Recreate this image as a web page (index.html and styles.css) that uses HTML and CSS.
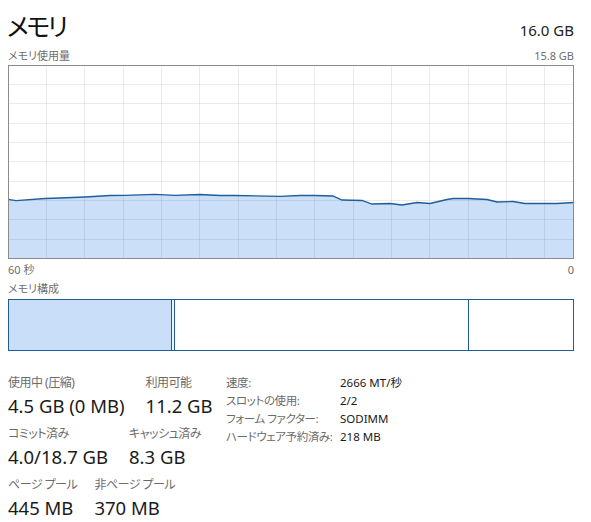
FILE: index.html
```html
<!DOCTYPE html>
<html lang="ja">
<head>
<meta charset="utf-8">
<link rel="stylesheet" href="styles.css">
</head>
<body>
<div class="page">
  <div class="header">
    <div class="title">メモリ</div>
    <div class="total">16.0 GB</div>
  </div>
  <div class="sub-row">
    <span>メモリ使用量</span>
    <span>15.8 GB</span>
  </div>
  <svg class="graph" width="566" height="194" viewBox="0 0 566 194">
    <polygon class="fill" points="0,134.3 8,135.7 37,133.5 52,133 77,132 102,130.5 117,130.3 147,129.3 167,130.3 192,129.5 212,130.5 227,130.5 272,131.3 292,130.5 307,130.5 325,131 334,135 354,135.5 364,139 382,138.5 394,140 409,137.5 422,138.5 439,134.5 445,133.5 460,133.5 479,134.5 489,137 505,136.5 517,138.5 549,138.5 566,137.5 566,194 0,194"/>
    <g class="grid">
      <line x1="38.5" y1="0" x2="38.5" y2="194"/>
      <line x1="76.5" y1="0" x2="76.5" y2="194"/>
      <line x1="115.5" y1="0" x2="115.5" y2="194"/>
      <line x1="153.5" y1="0" x2="153.5" y2="194"/>
      <line x1="191.5" y1="0" x2="191.5" y2="194"/>
      <line x1="230.5" y1="0" x2="230.5" y2="194"/>
      <line x1="268.5" y1="0" x2="268.5" y2="194"/>
      <line x1="306.5" y1="0" x2="306.5" y2="194"/>
      <line x1="345.5" y1="0" x2="345.5" y2="194"/>
      <line x1="383.5" y1="0" x2="383.5" y2="194"/>
      <line x1="421.5" y1="0" x2="421.5" y2="194"/>
      <line x1="460.5" y1="0" x2="460.5" y2="194"/>
      <line x1="498.5" y1="0" x2="498.5" y2="194"/>
      <line x1="536.5" y1="0" x2="536.5" y2="194"/>
      <line x1="0" y1="19.5" x2="566" y2="19.5"/>
      <line x1="0" y1="38.5" x2="566" y2="38.5"/>
      <line x1="0" y1="58.5" x2="566" y2="58.5"/>
      <line x1="0" y1="77.5" x2="566" y2="77.5"/>
      <line x1="0" y1="96.5" x2="566" y2="96.5"/>
      <line x1="0" y1="116.5" x2="566" y2="116.5"/>
      <line x1="0" y1="135.5" x2="566" y2="135.5"/>
      <line x1="0" y1="154.5" x2="566" y2="154.5"/>
      <line x1="0" y1="174.5" x2="566" y2="174.5"/>
    </g>
    <polyline class="line" points="0,134.3 8,135.7 37,133.5 52,133 77,132 102,130.5 117,130.3 147,129.3 167,130.3 192,129.5 212,130.5 227,130.5 272,131.3 292,130.5 307,130.5 325,131 334,135 354,135.5 364,139 382,138.5 394,140 409,137.5 422,138.5 439,134.5 445,133.5 460,133.5 479,134.5 489,137 505,136.5 517,138.5 549,138.5 566,137.5"/>
    <rect class="frame" x="0.5" y="0.5" width="565" height="193"/>
  </svg>
  <div class="sub-row axis">
    <span>60 秒</span>
    <span>0</span>
  </div>
  <div class="sub-row comp-label">
    <span>メモリ構成</span>
  </div>
  <div class="comp">
    <div class="seg inuse" style="width:162px"></div>
    <div class="seg modified" style="width:2px"></div>
    <div class="seg standby" style="width:293px"></div>
    <div class="seg free"></div>
  </div>
  <div class="stats">
    <div class="stat-rows">
      <div class="stat-row">
        <div class="stat"><div class="label">使用中 (圧縮)</div><div class="value">4.5 GB (0 MB)</div></div>
        <div class="stat"><div class="label">利用可能</div><div class="value">11.2 GB</div></div>
      </div>
      <div class="stat-row">
        <div class="stat"><div class="label">コミット済み</div><div class="value">4.0/18.7 GB</div></div>
        <div class="stat"><div class="label">キャッシュ済み</div><div class="value">8.3 GB</div></div>
      </div>
      <div class="stat-row">
        <div class="stat"><div class="label">ページ プール</div><div class="value">445 MB</div></div>
        <div class="stat"><div class="label">非ページ プール</div><div class="value">370 MB</div></div>
      </div>
    </div>
    <div class="props">
      <div class="pk">速度:</div><div class="pv">2666 MT/秒</div>
      <div class="pk">スロットの使用:</div><div class="pv">2/2</div>
      <div class="pk">フォーム ファクター:</div><div class="pv">SODIMM</div>
      <div class="pk">ハードウェア予約済み:</div><div class="pv">218 MB</div>
    </div>
  </div>
</div>
</body>
</html>
```

FILE: styles.css
```css
html, body {
  margin: 0;
  padding: 0;
  background: #ffffff;
}
body {
  font-family: "Noto Sans", "Noto Sans CJK JP", sans-serif;
  font-feature-settings: "palt";
  color: #1a1a1a;
}
.page {
  width: 591px;
  height: 522px;
  overflow: hidden;
  padding: 0 17px 0 8px;
  box-sizing: border-box;
}
.header {
  display: flex;
  justify-content: space-between;
  align-items: flex-start;
  height: 46px;
}
.title {
  font-size: 25px;
  line-height: 46px;
  margin-top: 3px;
  margin-left: -1px;
  letter-spacing: -2.5px;
  color: #111;
}
.total {
  font-size: 15px;
  line-height: 46px;
  margin-top: 7px;
  color: #222;
}
.sub-row {
  display: flex;
  justify-content: space-between;
  font-size: 11px;
  line-height: 19px;
  height: 19px;
  color: #6e6e6e;
}
.graph {
  display: block;
}
.graph .fill {
  fill: #cbe0f8;
}
.graph .grid line {
  stroke: rgba(0, 0, 0, 0.08);
  stroke-width: 1;
}
.graph .line {
  fill: none;
  stroke: #1f5d9b;
  stroke-width: 1.3;
}
.graph .frame {
  fill: none;
  stroke: #8b8b8b;
  stroke-width: 1;
}
.axis {
  margin-top: 1px;
}
.comp-label {
  margin-bottom: 1px;
}
.comp {
  display: flex;
  height: 52px;
  border: 1px solid #1f5c98;
  box-sizing: border-box;
}
.seg {
  border-right: 1px solid #1f5c98;
  flex: none;
}
.seg.inuse {
  background: #c9def8;
}
.seg.modified {
  background: #edf4fc;
}
.seg.standby {
  background: #ffffff;
}
.seg.free {
  flex: 1;
  border-right: none;
}
.stats {
  display: grid;
  grid-template-columns: 218px auto;
  margin-top: 23px;
}
.stat-row {
  display: flex;
  gap: 21px;
  margin-bottom: 5px;
}
.label {
  font-size: 12px;
  line-height: 18px;
  letter-spacing: -0.5px;
  color: #6b6b6b;
  white-space: nowrap;
  max-width: 0;
  overflow: visible;
}
.value {
  font-size: 18.5px;
  line-height: 28px;
  color: #1a1a1a;
  white-space: nowrap;
}
.props {
  display: grid;
  grid-template-columns: 114px auto;
  grid-auto-rows: 18px;
  font-size: 11.5px;
  line-height: 18px;
  white-space: nowrap;
}
.pk {
  color: #6b6b6b;
  letter-spacing: -0.4px;
}
.pv {
  color: #1a1a1a;
}
```
